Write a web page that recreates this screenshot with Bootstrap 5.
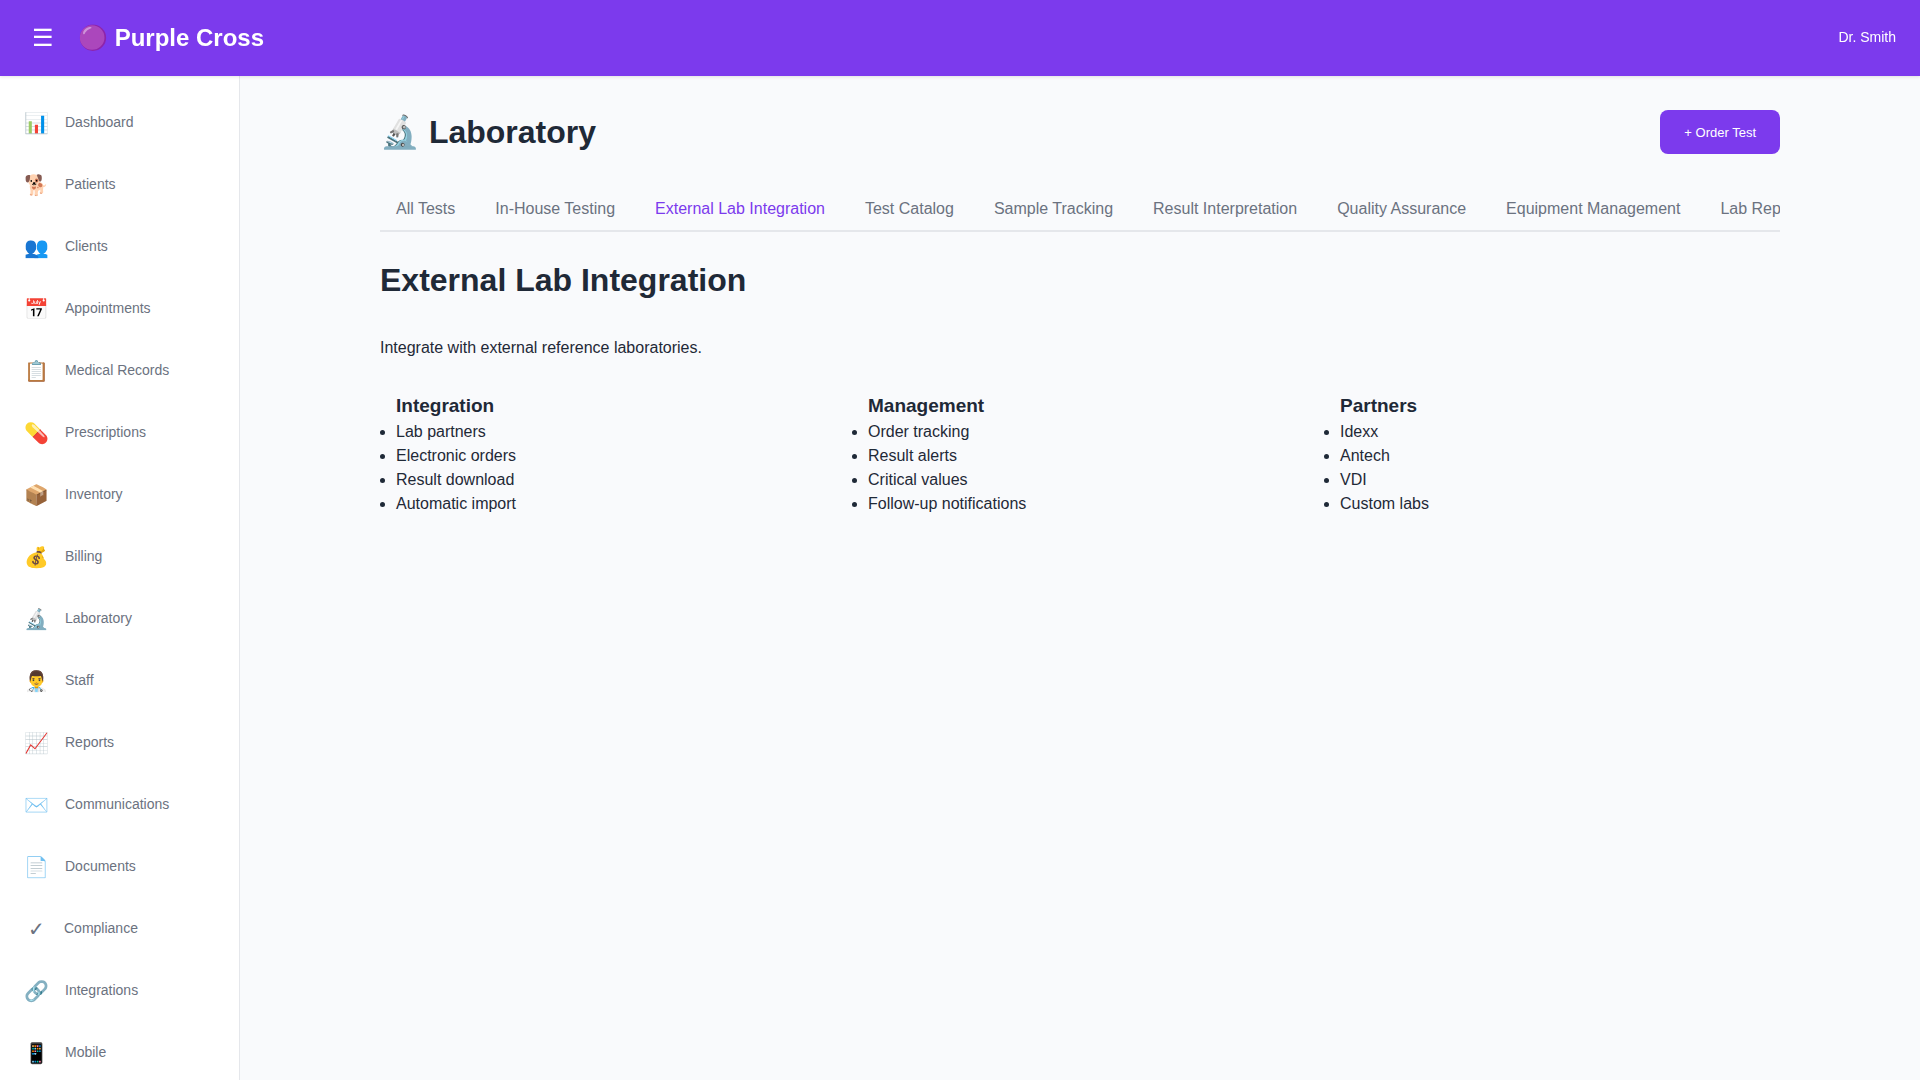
<!DOCTYPE html>
<html lang="en">
<head>
<meta charset="utf-8">
<meta name="viewport" content="width=device-width, initial-scale=1">
<title>Purple Cross - Laboratory</title>
<link href="https://cdn.jsdelivr.net/npm/bootstrap@5.3.0/dist/css/bootstrap.min.css" rel="stylesheet">
<style>
  :root { --brand: #7c3aed; --ink: #1f2937; --soft: #6b7280; --line: #e5e7eb; }
  body { font-family: "Liberation Sans", Arial, sans-serif; color: var(--ink); background: #f9fafc; line-height: 24px; }
  .topbar { background: var(--brand); box-shadow: 0 1px 3px rgba(0, 0, 0, .1); z-index: 10; }
  .menu-toggle { font-size: 24px; line-height: 28px; }
  .brand-name { font-size: 24px; line-height: 36px; }
  .user-name { font-size: 14px; padding-bottom: 2px; }
  .sidebar { flex: 0 0 240px; border-right: 1px solid var(--line); overflow-y: auto; scrollbar-width: none; }
  .sidebar::-webkit-scrollbar, .tab-strip::-webkit-scrollbar { display: none; }
  .side-link { color: var(--soft); font-size: 14px; height: 62px; gap: 16px; }
  .side-label { padding-bottom: 2px; }
  .side-icon { font-size: 20px; line-height: 30px; min-width: 24px; text-align: center; }
  .page-wrap { max-width: 1400px; }
  .page-title { font-size: 32px; line-height: 48px; }
  .btn-brand { background: var(--brand); color: #fff; font-size: 13px; line-height: 16px; padding: 15px 24px 13px; border: 0; border-radius: 8px; }
  .btn-brand:hover { background: #6d28d9; color: #fff; }
  .tab-strip { border-bottom: 2px solid var(--line); overflow-x: auto; scrollbar-width: none; }
  .tab-item { color: var(--soft); background: none; line-height: 18px; padding: 12px 16px; }
  .tab-item.active { color: var(--brand); }
  .group-title { font-size: 19px; line-height: 28px; }
</style>
<script src="https://cdn.jsdelivr.net/npm/bootstrap@5.3.0/dist/js/bootstrap.bundle.min.js"></script>
</head>
<body>
<div class="d-flex flex-column vh-100 overflow-hidden">
  <header class="topbar d-flex align-items-center justify-content-between px-4 py-3 text-white position-relative">
    <div class="d-flex align-items-center gap-3">
      <button type="button" class="menu-toggle border-0 bg-transparent text-white p-2" aria-label="Toggle menu">☰</button>
      <div class="brand-name fw-bold">🟣 Purple Cross</div>
    </div>
    <span class="user-name">Dr. Smith</span>
  </header>
  <div class="d-flex flex-grow-1 overflow-hidden">
    <nav class="sidebar bg-white py-3" aria-label="Main">
      <a href="#" class="side-link d-flex align-items-center px-4 text-decoration-none"><span class="side-icon">📊</span><span class="side-label">Dashboard</span></a>
      <a href="#" class="side-link d-flex align-items-center px-4 text-decoration-none"><span class="side-icon">🐕</span><span class="side-label">Patients</span></a>
      <a href="#" class="side-link d-flex align-items-center px-4 text-decoration-none"><span class="side-icon">👥</span><span class="side-label">Clients</span></a>
      <a href="#" class="side-link d-flex align-items-center px-4 text-decoration-none"><span class="side-icon">📅</span><span class="side-label">Appointments</span></a>
      <a href="#" class="side-link d-flex align-items-center px-4 text-decoration-none"><span class="side-icon">📋</span><span class="side-label">Medical Records</span></a>
      <a href="#" class="side-link d-flex align-items-center px-4 text-decoration-none"><span class="side-icon">💊</span><span class="side-label">Prescriptions</span></a>
      <a href="#" class="side-link d-flex align-items-center px-4 text-decoration-none"><span class="side-icon">📦</span><span class="side-label">Inventory</span></a>
      <a href="#" class="side-link d-flex align-items-center px-4 text-decoration-none"><span class="side-icon">💰</span><span class="side-label">Billing</span></a>
      <a href="#" class="side-link d-flex align-items-center px-4 text-decoration-none"><span class="side-icon">🔬</span><span class="side-label">Laboratory</span></a>
      <a href="#" class="side-link d-flex align-items-center px-4 text-decoration-none"><span class="side-icon">👨‍⚕️</span><span class="side-label">Staff</span></a>
      <a href="#" class="side-link d-flex align-items-center px-4 text-decoration-none"><span class="side-icon">📈</span><span class="side-label">Reports</span></a>
      <a href="#" class="side-link d-flex align-items-center px-4 text-decoration-none"><span class="side-icon">✉️</span><span class="side-label">Communications</span></a>
      <a href="#" class="side-link d-flex align-items-center px-4 text-decoration-none"><span class="side-icon">📄</span><span class="side-label">Documents</span></a>
      <a href="#" class="side-link d-flex align-items-center px-4 text-decoration-none"><span class="side-icon">✓</span><span class="side-label">Compliance</span></a>
      <a href="#" class="side-link d-flex align-items-center px-4 text-decoration-none"><span class="side-icon">🔗</span><span class="side-label">Integrations</span></a>
      <a href="#" class="side-link d-flex align-items-center px-4 text-decoration-none"><span class="side-icon">📱</span><span class="side-label">Mobile</span></a>
    </nav>
    <main class="flex-grow-1 overflow-auto py-4">
      <div class="page-wrap mx-auto py-2">
        <div class="d-flex align-items-center justify-content-between mb-4 pb-2">
          <h1 class="page-title fw-bold mb-0">🔬 Laboratory</h1>
          <button type="button" class="btn btn-brand">+ Order Test</button>
        </div>
        <div class="tab-strip d-flex gap-2 mb-4" role="tablist">
          <button type="button" role="tab" class="tab-item border-0 text-nowrap">All Tests</button>
          <button type="button" role="tab" class="tab-item border-0 text-nowrap">In-House Testing</button>
          <button type="button" role="tab" class="tab-item border-0 text-nowrap active" aria-selected="true">External Lab Integration</button>
          <button type="button" role="tab" class="tab-item border-0 text-nowrap">Test Catalog</button>
          <button type="button" role="tab" class="tab-item border-0 text-nowrap">Sample Tracking</button>
          <button type="button" role="tab" class="tab-item border-0 text-nowrap">Result Interpretation</button>
          <button type="button" role="tab" class="tab-item border-0 text-nowrap">Quality Assurance</button>
          <button type="button" role="tab" class="tab-item border-0 text-nowrap">Equipment Management</button>
          <button type="button" role="tab" class="tab-item border-0 text-nowrap">Lab Reports</button>
        </div>
        <section>
          <h2 class="page-title fw-bold mb-4 pb-2">External Lab Integration</h2>
          <p class="mb-4 pb-2">Integrate with external reference laboratories.</p>
          <div class="row gx-3">
            <div class="col-4">
              <div class="ps-3">
                <h3 class="group-title fw-bold mb-0">Integration</h3>
                <ul class="ps-0 mb-0">
                  <li>Lab partners</li>
                  <li>Electronic orders</li>
                  <li>Result download</li>
                  <li>Automatic import</li>
                </ul>
              </div>
            </div>
            <div class="col-4">
              <div class="ps-3">
                <h3 class="group-title fw-bold mb-0">Management</h3>
                <ul class="ps-0 mb-0">
                  <li>Order tracking</li>
                  <li>Result alerts</li>
                  <li>Critical values</li>
                  <li>Follow-up notifications</li>
                </ul>
              </div>
            </div>
            <div class="col-4">
              <div class="ps-3">
                <h3 class="group-title fw-bold mb-0">Partners</h3>
                <ul class="ps-0 mb-0">
                  <li>Idexx</li>
                  <li>Antech</li>
                  <li>VDI</li>
                  <li>Custom labs</li>
                </ul>
              </div>
            </div>
          </div>
        </section>
      </div>
    </main>
  </div>
</div>
</body>
</html>
